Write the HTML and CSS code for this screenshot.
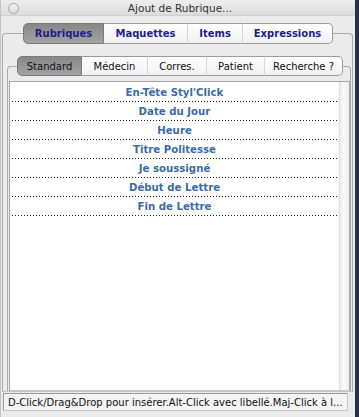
FILE: index.html
```html
<!DOCTYPE html>
<html lang="fr">
<head>
    <meta charset="UTF-8">
    <title>Ajout de Rubrique...</title>
    <link rel="stylesheet" href="styles.css">
</head>
<body>
    <div class="window">
        <div class="titlebar">
            <span class="close"></span>
            <span class="title">Ajout de Rubrique...</span>
        </div>

        <div class="tabbox outer">
            <div class="tabs big">
                <span class="tab sel" style="width:81px">Rubriques</span>
                <span class="tab" style="width:84px">Maquettes</span>
                <span class="tab" style="width:55px">Items</span>
                <span class="tab last" style="width:90px">Expressions</span>
            </div>

            <div class="tabbox inner">
                <div class="tabs small">
                    <span class="tab sel" style="width:65px">Standard</span>
                    <span class="tab" style="width:66px">Médecin</span>
                    <span class="tab" style="width:59px">Corres.</span>
                    <span class="tab" style="width:58px">Patient</span>
                    <span class="tab last" style="width:78px">Recherche ?</span>
                </div>

                <div class="list">
                    <div class="rows">
                        <div class="row">En-Tête Styl'Click</div>
                        <div class="row">Date du Jour</div>
                        <div class="row">Heure</div>
                        <div class="row">Titre Politesse</div>
                        <div class="row">Je soussigné</div>
                        <div class="row">Début de Lettre</div>
                        <div class="row">Fin de Lettre</div>
                    </div>
                    <div class="track"></div>
                </div>
            </div>
        </div>

        <div class="status">D-Click/Drag&amp;Drop pour insérer.Alt-Click avec libellé.Maj-Click à l...</div>
    </div>
</body>
</html>
```

FILE: styles.css
```css
body { margin: 0; background: #24324f; font-family: "DejaVu Sans", sans-serif; }
.window { width: 355px; height: 417px; background: #ebebeb; display: flex; flex-direction: column; box-sizing: border-box; border-left: 1px solid #c4c4c4; }

.titlebar { height: 16px; flex: none; position: relative; background: linear-gradient(#ededed, #dcdcdc); border-bottom: 1px solid #cfcfcf; box-sizing: border-box; display: flex; justify-content: center; align-items: center; }
.title { font-size: 10.5px; color: #333; margin-left: 4px; }
.close { position: absolute; left: 7px; top: 3px; width: 9px; height: 9px; border-radius: 50%; border: 1px solid #a3a3a3; background: linear-gradient(#f4f4f4, #dadada); }

.tabbox { border: 1px solid #a9a9a9; border-radius: 4px 4px 0 0; display: flex; flex-direction: column; }
.outer { flex: 1; margin: 17px 2px 0 1px; border-bottom: 1px solid #c2c2c2; }
.inner { flex: 1; margin: 22px 1px 0 4px; border-bottom: none; }

.tabs { display: flex; align-self: flex-start; flex: none; }
.tabs.big { height: 21px; margin: -11px 0 0 20px; }
.tabs.small { height: 20px; margin: -11px 0 0 9px; }

.tab { box-sizing: border-box; display: flex; align-items: center; justify-content: center; background: linear-gradient(#ffffff, #f1f1f1); border: 1px solid #9c9c9c; border-left: none; border-right: 1px solid #d6d6d6; }
.tab.last { border-right: 1px solid #9c9c9c; border-radius: 0 5px 5px 0; }
.tab.sel { border-left: 1px solid #7a7a7a; border-color: #7a7a7a; border-radius: 5px 0 0 5px; background: linear-gradient(#878787, #a2a2a2); }
.big .tab { font-size: 10px; font-weight: bold; color: #1d1d8e; }
.small .tab { font-size: 10px; color: #111; }

.list { flex: 1; margin: 5px 0 0 1px; border: 1px solid #a6a6a6; border-bottom: 1px solid #c8c8c8; background: #fff; display: flex; }
.rows { flex: 1; padding-top: 1px; }
.row { height: 19px; box-sizing: border-box; display: flex; align-items: center; justify-content: center; padding-bottom: 1px; margin: 0 2px 0 2px; font-size: 10.2px; font-weight: bold; color: #3b6ca6; background-image: linear-gradient(to right, #222 1px, transparent 1px); background-size: 3px 1px; background-repeat: repeat-x; background-position: left bottom; }
.track { width: 9px; flex: none; background: linear-gradient(to right, #ececec, #fafafa 40%, #f0f0f0); border-left: 1px solid #dedede; }

.status { flex: none; height: 18px; box-sizing: border-box; margin: 1px 7px 6px 2px; border: 1px solid #9a9a9a; border-right-color: #c6c6c6; border-bottom-color: #c6c6c6; background: #f4f4f4; font-size: 10px; color: #111; padding-left: 4px; display: flex; align-items: center; white-space: nowrap; overflow: hidden; }
```
